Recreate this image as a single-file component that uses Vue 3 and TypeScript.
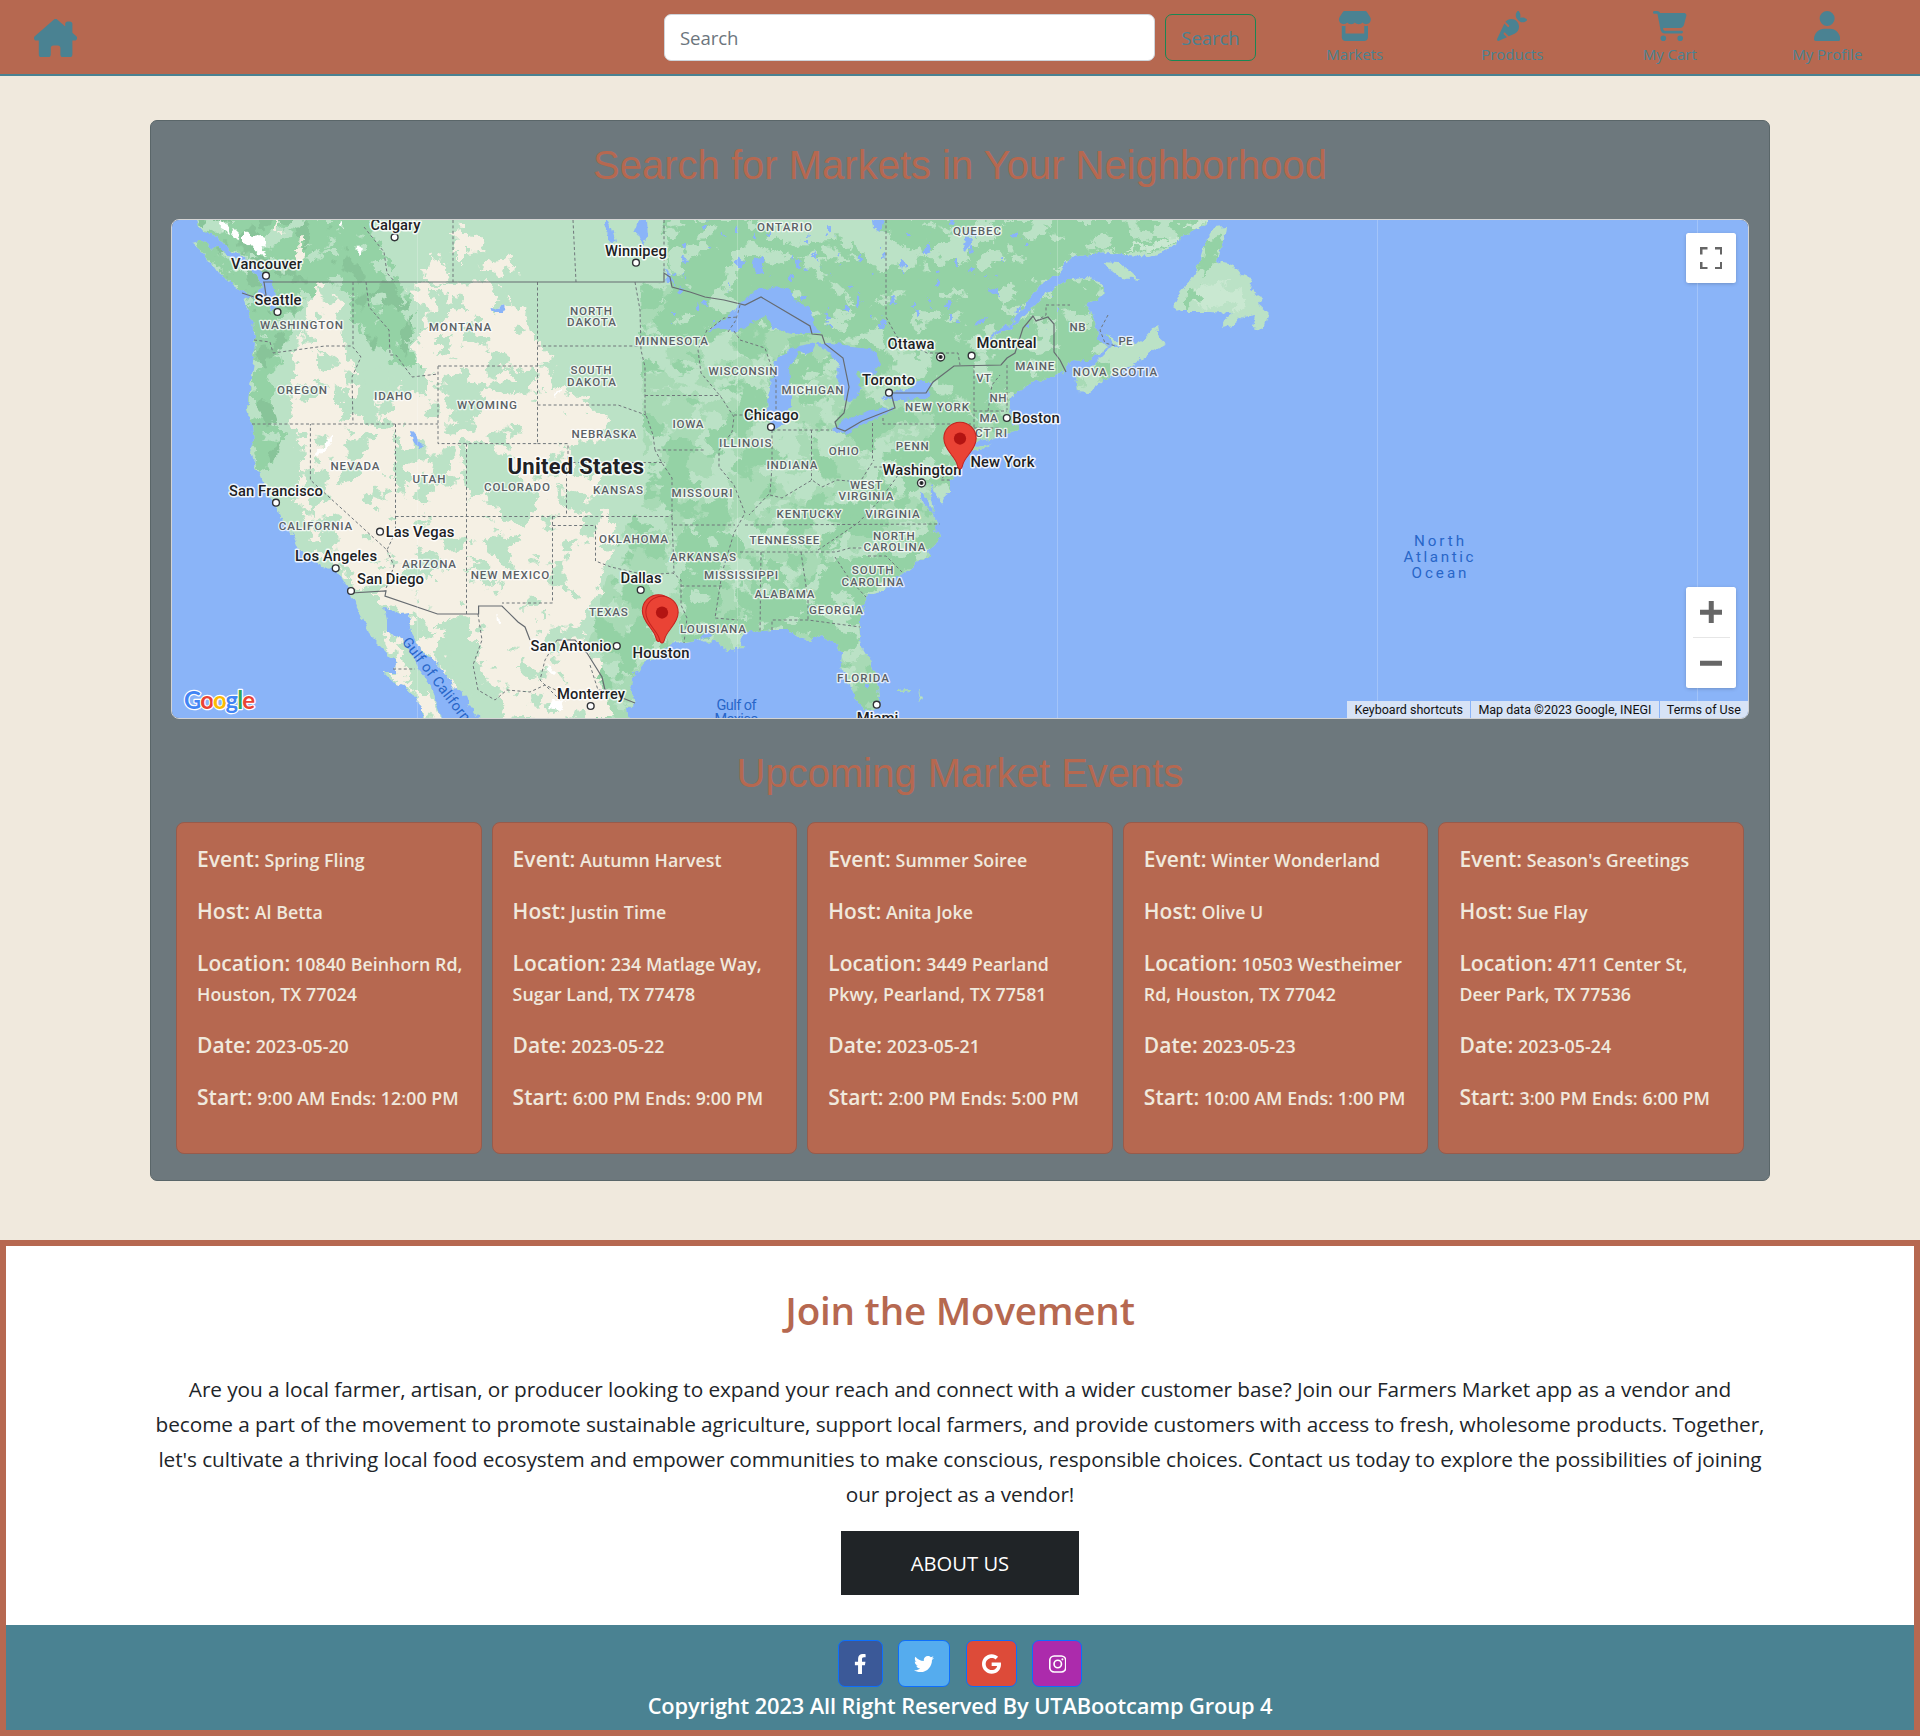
<script setup lang="ts">
interface MapLabel { t: string; x: number; y: number; w: number }
interface Dot { x: number; y: number }
interface MarketEvent { name: string; host: string; address: string[]; date: string; start: string; end: string }

const label = (t: string, x: number, y: number, w: number): MapLabel => ({ t, x, y, w })

const cities: MapLabel[] = [
  label('Calgary', 395.5, 230, 50), label('Winnipeg', 636, 256, 62), label('Vancouver', 266.6, 269, 71),
  label('Seattle', 278, 305, 47), label('San Francisco', 276, 495.7, 94), label('Las Vegas', 420, 536.7, 68.5),
  label('Los Angeles', 336, 561, 82), label('San Diego', 390.5, 584, 67), label('Dallas', 641, 582.7, 41),
  label('San Antonio', 571, 651, 81), label('Houston', 661, 658, 57), label('Monterrey', 591, 699, 68),
  label('Ottawa', 911, 349, 47), label('Montreal', 1006.6, 348, 60), label('Toronto', 888.6, 385.3, 53),
  label('Boston', 1036, 423.3, 47.5), label('Chicago', 771.3, 420.2, 54.7), label('New York', 1002.4, 467, 64),
  label('Washington', 922, 475, 79), label('Miami', 877.5, 722.5, 41.5),
]

const states: MapLabel[] = [
  label('WASHINGTON', 301.6, 328.7, 83), label('MONTANA', 460, 331, 62.5), label('NORTH', 591, 315, 42),
  label('DAKOTA', 591.5, 326.3, 49), label('SOUTH', 591, 374.3, 41), label('DAKOTA', 591.5, 385.7, 49),
  label('MINNESOTA', 671.5, 345.3, 73), label('OREGON', 302, 393.7, 50), label('IDAHO', 393, 400, 38),
  label('WYOMING', 487, 409.3, 60), label('IOWA', 688, 428.3, 31), label('NEBRASKA', 604, 437.7, 65),
  label('NEVADA', 355, 470, 49), label('UTAH', 429, 483.3, 33), label('COLORADO', 517, 490.7, 66),
  label('KANSAS', 618, 493.7, 50), label('CALIFORNIA', 315.5, 530, 73.5), label('ARIZONA', 429, 568.3, 54),
  label('NEW MEXICO', 510, 578.7, 78.5), label('OKLAHOMA', 633.5, 543.3, 69), label('TEXAS', 608.4, 615.7, 39),
  label('ONTARIO', 784.5, 230.7, 55), label('QUEBEC', 977, 235, 48), label('NB', 1077.5, 331, 16),
  label('PE', 1125.6, 344.7, 14), label('WISCONSIN', 743, 375, 69), label('MICHIGAN', 812.5, 393.7, 62),
  label('VT', 983.7, 381.7, 15), label('MAINE', 1034.8, 369.7, 39), label('NOVA SCOTIA', 1115, 375.7, 84.5),
  label('NH', 998, 401.7, 17), label('NEW YORK', 937, 411, 64), label('MA', 988.6, 421.7, 18),
  label('CT RI', 991, 436.7, 32), label('ILLINOIS', 745.3, 447.3, 52.4), label('OHIO', 843.8, 455, 30),
  label('PENN', 912.3, 450.3, 33), label('INDIANA', 792, 469, 51), label('WEST', 866, 489, 32),
  label('VIRGINIA', 866, 500.3, 55), label('MISSOURI', 702, 497, 61), label('KENTUCKY', 809, 518, 65),
  label('VIRGINIA', 892.5, 518, 54.5), label('TENNESSEE', 784.4, 543.7, 70), label('NORTH', 893.8, 539.7, 41.7),
  label('CAROLINA', 894.4, 551, 62), label('ARKANSAS', 703, 561, 66), label('MISSISSIPPI', 741, 579.3, 74),
  label('SOUTH', 872.7, 574.3, 41.7), label('CAROLINA', 872.5, 585.7, 62), label('ALABAMA', 784.5, 598.3, 60),
  label('GEORGIA', 836, 613.7, 54), label('LOUISIANA', 713, 633.3, 66), label('FLORIDA', 863, 682.3, 52),
]

const dot = (x: number, y: number): Dot => ({ x, y })
const dots: Dot[] = [
  dot(394.6, 237.3), dot(636, 262.7), dot(266, 275.7), dot(277.5, 312), dot(276, 502.7), dot(380, 531.7),
  dot(335.7, 568.3), dot(351, 591), dot(640.7, 590), dot(616.8, 646), dot(590.7, 706), dot(971.6, 355.7),
  dot(889, 392.7), dot(1006.8, 418), dot(771, 427), dot(876.7, 704.7),
]
const capitals: Dot[] = [dot(940.6, 357), dot(921.5, 483)]
const pins: Dot[] = [dot(960, 469), dot(658.5, 641.5), dot(662, 643)]
const seams: number[] = [417.5, 737.5, 1057.5, 1377.5, 1697.5]

const landPath =
  'M196 218L199 226L204 232L212 234L221 240L226 247L232 252L245 257L254 266L266 276L270 284L275 292L277 303L272 312L268 302L252 297L244 298L248 310L252 322L255 337L254 363L250 387L247 410L252 425L254 440L250 452L257 470L264 487L271 498L277 508L282 520L293 535L300 552L318 560L321 567L334 568L343 580L351 593L357 607L364 620L371 637L384 650L396 662L395 672L382 672L393 683L407 687L414 697L422 707L422 722L443 722L436 703L432 687L421 673L412 653L400 637L387 633L387 620L384 607L393 610L400 614L409 613L412 633L421 650L436 663L445 672L454 687L466 697L470 705L482 722 ' +
  'L629 722L627 710L635 703L630 687L634 672L640 669L646 662L664 650L675 642L686 643L700 640L709 643L713 638L720 647L728 650L744 648L738 641L745 634L751 632L772 630L789 630L799 638L809 640L822 635L835 643L842 653L841 667L849 683L856 700L864 710L874 711L879 703L878 687L870 660L862 647L859 627L862 610L868 595L881 592L893 580L908 570L920 560L931 557L926 551L936 545L941 537L934 531L937 521L931 511L922 503L920 491L928 500L935 514L931 494L929 481L936 494L941 505L944 498L950 493L950 480L960 468L966 453L977 450L992 443L978 447L966 445L984 440L996 438L1006 433L1019 430L1018 424L1013 425L1010 413L1011 400L1019 390L1034 382L1050 377L1063 372L1073 360L1085 361L1096 355L1107 347L1098 340L1096 323L1090 310L1085 305L1103 297L1104 285L1097 279L1084 278L1065 280L1042 297L1027 313L1011 328L997 334L980 344L990 335L1011 324L1027 303L1042 282L1059 275L1063 264L1073 257L1090 254L1111 253L1149 257L1168 250L1187 233L1205 225L1214 218Z ' +
  'M192 243L200 241L207 242L212 249L218 247L228 256L239 259L257 275L262 288L254 297L244 291L236 287L230 282L218 273L214 267L209 262L200 250Z ' +
  'M1214 228L1226 227L1224 240L1216 260L1220 262L1233 265L1241 275L1252 277L1250 290L1262 297L1258 304L1268 313L1262 330L1252 328L1255 315L1243 317L1233 325L1222 327L1226 318L1233 313L1210 312L1180 312L1173 307L1180 293L1191 280L1199 263L1205 243Z ' +
  'M1101 262L1119 263L1140 280L1122 278Z ' +
  'M1076 373L1090 368L1111 347L1130 347L1143 340L1157 325L1159 337L1166 343L1149 353L1130 367L1103 380L1088 393L1078 392Z ' +
  'M1105 333L1115 341L1134 343L1128 348L1112 344Z ' +
  'M898 690L911 689L910 691L898 692ZM918 690L922 697L919 702L920 696Z'

const forestPath =
  'M196 218L365 218L384 252L395 282L410 284L408 310L420 330L408 345L420 365L412 377L396 355L372 350L356 318L352 290L330 282L300 300L286 340L278 360L270 400L282 440L276 458L262 470L250 452L247 410L255 363L252 320L244 298L236 287L192 243Z ' +
  'M664 218L1214 218L1168 250L1073 257L1059 275L1011 324L1042 297L1065 280L1103 285L1107 347L1063 372L1010 400L985 405L974 440L955 455L934 490L926 482L905 470L880 510L850 530L820 560L870 560L900 540L937 525L941 540L908 570L866 595L861 640L835 643L800 630L730 630L680 636L681 580L674 540L690 530L735 535L722 575L717 620L745 618L765 560L780 560L790 600L815 580L820 540L860 510L890 465L930 440L940 412L900 400L930 366L896 340L880 350L820 335L772 328L735 332L705 330L670 345L655 330L660 300L672 287Z ' +
  'M775 370L805 352L830 360L815 378L796 382L788 376Z M430 360L446 372L440 415L448 440L432 430L418 470L424 400Z M500 460L520 470L535 510L508 508L488 480Z'

const plainsPath =
  'M405 288L430 284L500 283L510 300L525 310L537 343L560 357L546 393L575 392L610 420L600 440L568 446L572 476L600 480L580 510L614 520L618 547L603 567L600 590L593 607L578 627L586 640L604 673L602 690L614 717L507 722L500 690L482 680L474 640L462 618L443 620L437 680L470 705L412 633L407 612L384 606L384 593L357 593L345 570L321 560L307 520L296 495L298 470L307 453L296 440L293 420L290 390L293 357L303 330L307 303L318 287L326 292L339 300L337 320L343 337L357 377L352 417L375 424L385 395L400 385L418 398L421 370L415 340L430 325L420 305Z ' +
  'M453 225L462 236L475 232L482 246L470 256L454 256ZM421 270L432 262L437 252L448 270L450 281L425 280ZM478 265L495 262L510 260L515 270L495 274L485 272ZM291 243L305 242L308 255L300 270L296 255ZM275 218L284 240L280 218Z ' +
  'M384 650L396 662L395 672L382 672L393 683L412 690L408 670L400 640L387 633Z M414 690L430 690L440 722L422 722Z'

const greenOnPlains =
  'M460 440L488 444L520 476L540 500L524 530L500 512L486 490L466 500ZM420 548L435 554L444 570L430 574L412 566ZM466 550L490 570L500 588L484 586ZM430 290L460 300L470 315L440 305ZM440 380L460 372L490 395L470 425L450 412ZM452 405L470 412L450 430ZM340 390L358 400L350 420L338 410ZM398 360L420 372L430 400L410 390ZM310 460L330 500L316 520L304 495ZM396 430L410 455L405 500L392 480ZM440 625L462 622L480 650L478 680L500 700L490 720L465 690L448 660ZM556 480L566 492L590 502L578 512L560 502ZM380 360L395 380L372 400L362 378ZM320 350L340 358L335 372L318 362ZM440 330L455 342L436 356ZM520 360L534 380L525 395L510 378ZM545 610L550 616L540 618ZM425 470L432 490L420 512L414 494Z'

const waterPath =
  'M709 330L722 320L740 305L750 295L759 288L789 287L795 302L809 307L814 323L820 333L793 333L772 328L767 317L752 322L736 332L724 329Z ' +
  'M768 413L767 397L771 380L776 360L793 347L816 343L812 352L805 354L798 350L796 358L789 367L791 390L791 407L786 423L772 431Z ' +
  'M816 343L830 343L850 346L870 348L877 355L881 367L870 377L858 370L860 390L853 400L849 403L843 395L837 380L838 362L833 357L825 350Z ' +
  'M832 430L841 421L851 418L870 411L895 407L881 418L862 424L847 435Z ' +
  'M883 400L893 392L905 389L920 382L933 382L927 398L904 400Z ' +
  'M639 218L646 220L647 240L643 246L639 236L634 232ZM607 218L612 228L616 243L610 240L603 225ZM411 432L416 433L418 440L422 445L419 449L413 441ZM665 268L671 277L676 286L672 283L667 283ZM752 260L763 255L763 273L756 274ZM872 218L884 220L881 232L873 228ZM967 234L972 240L966 252L962 248ZM987 288L998 290L998 296L990 293ZM491 310L505 306L503 312L494 312ZM700 640L706 630L712 636ZM866 684L870 683L870 688L866 689ZM264 274L273 282L276 296L270 298L264 286Z'

const saltPath =
  'M220 220L228 224L231 234L221 229ZM233 228L240 235L237 241L232 236ZM243 231L253 236L259 235L266 240L267 248L261 245L266 256L260 255L251 245L243 242ZM357 244L361 250L360 257L356 254ZM340 220L344 228L339 226ZM323 446L332 434L332 442L318 457L314 456ZM548 665L554 672L553 675L546 669ZM552 700L566 702L560 710L548 708ZM496 614L502 625L498 625ZM562 388L555 397L554 393Z'

const stateLines =
  'M364 227L384 252L387 273L395 282M453 220V282M573 220L576 282M664 220V273M353 282V346M254 340L270 342L273 353L325 346H352L361 357L352 377L353 424M252 424H438M366 282L369 307L389 330L390 355H396L412 377L438 374M438 366H537.5V443.6H438ZM537.5 282V366M537.5 346H641M537.5 405H618L646 415M635 282L640 310L641 350L645 367V412L653 435L655 450H705M645 395.5H721M537.5 443.6H568V462.5H665M466.5 443.6V614M566.5 462V516.5M395.5 516.5H672V478L662 463L655 450M395.5 424V532L387 550L310.4 480V424M387 550L394 566L385 591M552.5 516.5V603H502M552.5 525.5H595.5V561L611 567L646 575L673 573L681 580V605L687 618L684 643M672 517L674 573M681 586H722M674 525H735 ' +
  'M707 330L698 350L701 373L721 397L734 417L732 432L719 450V467L734 485L745 513L734 533L722 573L715 618L738 620M734 415H766M734 331L740 340L765 348L776 380V420M772 430V467L770 493L749 515M811.5 430V480M772 430H832M770 495L782 498L812 480L822 487L837 480L860 482L874 460M872.5 423V460M883 418V424H971M874 467H950M745 525L940 524M740 552H836L850 548H866M761 552L760 631M801 552L808 600V620M772 630V620H808L860 627M835 557L850 580L866 597M868 556H886L902 572M818 550L858 523M858 523L880 500L904 467M974 365V442M1007 365V410M974 411H1007M988 411L992 385L1000 375M974 428H1000M886 220V317L897 337L927 353H958L960 365M740 305L736 320L728 332M1036 321L1046 315V305H1070M950 467L941 480H950M393 669H415M478 614L482 640L473 665L478 690L495 700L507 690L530 692L545 685L560 692M557 640L545 660L540 680L560 700M590 665L598 690L610 690M710 329L724 318L738 317M1108 315L1100 330L1105 343L1116 346'

const countryLines =
  'M263 282H664V273L670 277L672 287L690 292L705 297L724 300L745 305L761 297L810 326L812 334L822 335L825 344L843 358L849 387L844 413L835 422L837 428L845 431L862 421L895 408L891 393H926L933 382L954 366L1001 365L1007 358L1015 353L1023 328L1033 316L1036 321L1048 317L1054 324V352L1060 360L1066 372M242 293L254 297L266 295L264 282M351 593L386 591L385 596L437.5 614H478.6V606H502L518 622L525 627L530 640M557 640H575L587 653L602 677L605 690L620 697L635 703'

const events: MarketEvent[] = [
  { name: 'Spring Fling', host: 'Al Betta', address: ['10840 Beinhorn Rd,', 'Houston, TX 77024'], date: '2023-05-20', start: '9:00 AM', end: '12:00 PM' },
  { name: 'Autumn Harvest', host: 'Justin Time', address: ['234 Matlage Way,', 'Sugar Land, TX 77478'], date: '2023-05-22', start: '6:00 PM', end: '9:00 PM' },
  { name: 'Summer Soiree', host: 'Anita Joke', address: ['3449 Pearland', 'Pkwy, Pearland, TX 77581'], date: '2023-05-21', start: '2:00 PM', end: '5:00 PM' },
  { name: 'Winter Wonderland', host: 'Olive U', address: ['10503 Westheimer', 'Rd, Houston, TX 77042'], date: '2023-05-23', start: '10:00 AM', end: '1:00 PM' },
  { name: "Season's Greetings", host: 'Sue Flay', address: ['4711 Center St,', 'Deer Park, TX 77536'], date: '2023-05-24', start: '3:00 PM', end: '6:00 PM' },
]

const navLinks = [
  { text: 'Markets', box: '0 0 576 512', w: 33.75, d: 'M547.6 103.8L490.3 13.1C485.2 5 476.1 0 466.4 0H109.6C99.9 0 90.8 5 85.7 13.1L28.3 103.8c-29.6 46.8-3.4 111.9 51.9 119.4c4 .5 8.1 .8 12.1 .8c26.1 0 49.3-11.4 65.2-29c15.9 17.6 39.1 29 65.2 29c26.1 0 49.3-11.4 65.2-29c15.9 17.6 39.1 29 65.2 29c26.2 0 49.3-11.4 65.2-29c16 17.6 39.1 29 65.2 29c4.1 0 8.1-.3 12.1-.8c55.5-7.4 81.8-72.5 52.1-119.4zM499.7 254.9l-.1 0c-5.3 .7-10.7 1.1-16.2 1.1c-12.4 0-24.3-1.9-35.4-5.3V384H128V250.6c-11.2 3.5-23.2 5.4-35.6 5.4c-5.5 0-11-.4-16.3-1.1l-.1 0c-4.1-.6-8.1-1.3-12-2.3V384v64c0 35.3 28.7 64 64 64H448c35.3 0 64-28.7 64-64V384 252.6c-4 1-8 1.8-12.3 2.3z' },
  { text: 'Products', box: '0 0 512 512', w: 30, d: 'M346.7 6C337.6 17 320 42.3 320 72c0 40 15.3 55.3 40 80s40 40 80 40c29.7 0 55-17.6 66-26.7c4-3.3 6-8.2 6-13.3s-2-10-6-13.2c-11.4-9.1-38.3-26.8-74-26.8c-32 0-40 8-40 8s8-8 8-40c0-35.7-17.7-62.6-26.8-74C370 2 365.1 0 360 0s-10 2-13.3 6zM244.6 136c-40 0-77.1 18.1-101.7 48.2l60.5 60.5c6.2 6.2 6.2 16.4 0 22.6s-16.4 6.2-22.6 0l-55.3-55.3 0 .1L2.2 477.9C-2 487-.1 497.8 7 505s17.9 9 27.1 4.8l134.7-62.4-52.1-52.1c-6.2-6.2-6.2-16.4 0-22.6s16.4-6.2 22.6 0L199.7 433l100.2-46.4c46.4-21.5 76.2-68 76.2-119.2C376 194.8 317.2 136 244.6 136z' },
  { text: 'My Cart', box: '0 0 576 512', w: 33.75, d: 'M0 24C0 10.7 10.7 0 24 0H69.5c22 0 41.5 12.8 50.6 32h411c26.3 0 45.5 25 38.6 50.4l-41 152.3c-8.5 31.4-37 53.3-69.5 53.3H170.7l5.4 28.5c2.2 11.3 12.1 19.5 23.6 19.5H488c13.3 0 24 10.7 24 24s-10.7 24-24 24H199.7c-34.6 0-64.3-24.6-70.7-58.5L77.4 54.5c-.7-3.8-4-6.5-7.9-6.5H24C10.7 48 0 37.3 0 24zM128 464a48 48 0 1 1 96 0 48 48 0 1 1 -96 0zm336-48a48 48 0 1 1 0 96 48 48 0 1 1 0-96z' },
  { text: 'My Profile', box: '0 0 448 512', w: 26.25, d: 'M224 256A128 128 0 1 0 224 0a128 128 0 1 0 0 256zm-45.7 48C79.8 304 0 383.8 0 482.3C0 498.7 13.3 512 29.7 512H418.3c16.4 0 29.7-13.3 29.7-29.7C448 383.8 368.2 304 269.7 304H178.3z' },
]

const pitch: string[] = [
  'Are you a local farmer, artisan, or producer looking to expand your reach and connect with a wider customer base? Join our Farmers Market app as a vendor and',
  'become a part of the movement to promote sustainable agriculture, support local farmers, and provide customers with access to fresh, wholesome products. Together,',
  "let's cultivate a thriving local food ecosystem and empower communities to make conscious, responsible choices. Contact us today to explore the possibilities of joining",
  'our project as a vendor!',
]
</script>

<template>
  <div class="page">
    <header class="navbar">
      <a class="home" aria-label="Home">
        <svg viewBox="0 0 576 512" width="43.2" height="38.4"><path d="M543.8 287.6c17 0 32-14 32-32.1c1-9-3-17-11-24L512 185V64c0-17.7-14.3-32-32-32H448c-17.7 0-32 14.3-32 32v36.7L309.5 7c-6-5-14-7-21-7s-15 1-22 8L10 231.5c-7 7-10 15-10 24c0 18 14 32.1 32 32.1h32v69.7c-.1 .9-.1 1.8-.1 2.8V472c0 22.1 17.9 40 40 40h16c1.2 0 2.4-.1 3.6-.2c1.5 .1 3 .2 4.5 .2H160h24c22.1 0 40-17.9 40-40V448 384c0-17.7 14.3-32 32-32h64c17.7 0 32 14.3 32 32v64 24c0 22.1 17.9 40 40 40h24 32.5c1.4 0 2.8 0 4.2-.1c1.1 .1 2.2 .1 3.3 .1h16c22.1 0 40-17.9 40-40V455.8c.3-2.6 .5-5.3 .5-8.1l-.7-160.2h32z" /></svg>
      </a>
      <form class="search">
        <input type="text" placeholder="Search" />
        <button type="button">Search</button>
      </form>
      <nav class="links">
        <a v-for="l in navLinks" :key="l.text">
          <svg :viewBox="l.box" :width="l.w" height="30"><path :d="l.d" /></svg>
          <span>{{ l.text }}</span>
        </a>
      </nav>
    </header>

    <main class="panel">
      <h1>Search for Markets in Your Neighborhood</h1>
      <div class="map">
        <svg class="canvas" viewBox="172 220 1576 498" width="1576" height="498">
          <defs>
            <clipPath id="land"><path :d="landPath" /></clipPath>
            <clipPath id="forest"><path :d="forestPath" /></clipPath>
            <clipPath id="plains"><path :d="plainsPath" /></clipPath>
            <clipPath id="eastern"><path d="M640 284H672L705 330L1110 330V722H590L590 640L615 545L645 500Z" /></clipPath>
            <filter id="rough" x="-5%" y="-5%" width="110%" height="110%">
              <feTurbulence type="fractalNoise" baseFrequency="0.07" numOctaves="3" seed="4" />
              <feDisplacementMap in="SourceGraphic" scale="26" xChannelSelector="R" yChannelSelector="G" />
            </filter>
            <filter id="coast" x="-5%" y="-5%" width="110%" height="110%">
              <feTurbulence type="fractalNoise" baseFrequency="0.14" numOctaves="3" seed="9" />
              <feDisplacementMap in="SourceGraphic" scale="7" xChannelSelector="R" yChannelSelector="G" />
            </filter>
            <filter id="n-dark" x="0" y="0" width="100%" height="100%" color-interpolation-filters="sRGB">
              <feTurbulence type="fractalNoise" baseFrequency="0.045 0.035" numOctaves="3" seed="12" />
              <feColorMatrix values="0 0 0 0 0.535  0 0 0 0 0.77  0 0 0 0 0.6  30 0 0 0 -17.2" />
            </filter>
            <filter id="n-green" x="0" y="0" width="100%" height="100%" color-interpolation-filters="sRGB">
              <feTurbulence type="fractalNoise" baseFrequency="0.026 0.032" numOctaves="4" seed="21" />
              <feColorMatrix values="0 0 0 0 0.58  0 0 0 0 0.824  0 0 0 0 0.647  40 0 0 0 -21.5" />
            </filter>
            <filter id="n-mid" x="0" y="0" width="100%" height="100%" color-interpolation-filters="sRGB">
              <feTurbulence type="fractalNoise" baseFrequency="0.03 0.04" numOctaves="4" seed="33" />
              <feColorMatrix values="0 0 0 0 0.66  0 0 0 0 0.855  0 0 0 0 0.71  40 0 0 0 -19.6" />
            </filter>
            <filter id="n-light" x="0" y="0" width="100%" height="100%" color-interpolation-filters="sRGB">
              <feTurbulence type="fractalNoise" baseFrequency="0.035 0.045" numOctaves="4" seed="7" />
              <feColorMatrix values="0 0 0 0 0.733  0 0 0 0 0.886  0 0 0 0 0.776  40 0 0 0 -24.2" />
            </filter>
            <filter id="n-lake" x="0" y="0" width="100%" height="100%" color-interpolation-filters="sRGB">
              <feTurbulence type="fractalNoise" baseFrequency="0.09 0.07" numOctaves="3" seed="17" />
              <feColorMatrix values="0 0 0 0 0.541  0 0 0 0 0.706  0 0 0 0 0.973  40 0 0 0 -28.4" />
            </filter>
          </defs>
          <rect x="172" y="220" width="1576" height="498" fill="#8ab4f8" />
          <g filter="url(#coast)">
            <path :d="landPath" fill="#bbe2c6" />
            <g clip-path="url(#land)">
              <g clip-path="url(#eastern)">
                <rect x="560" y="280" width="580" height="440" filter="url(#n-mid)" />
                <rect x="560" y="280" width="580" height="440" filter="url(#n-green)" />
              </g>
              <path :d="forestPath" fill="#94d2a5" filter="url(#rough)" />
              <g clip-path="url(#forest)">
                <rect x="172" y="218" width="240" height="260" filter="url(#n-dark)" />
                <rect x="172" y="218" width="1050" height="430" filter="url(#n-light)" />
              </g>
              <path d="M745 218L870 218L905 250L960 240L1010 218L960 262L930 258L880 272L850 240L780 244Z" fill="#bbe2c6" filter="url(#rough)" />
              <path d="M1110 250L1168 248L1214 218L1206 218L1165 240ZM1216 285L1240 288L1246 308L1225 305L1195 308L1200 288Z" fill="#c9e8d1" filter="url(#rough)" />
              <path d="M1206 240L1222 232L1214 262L1200 275ZM1186 296L1200 286L1204 300L1186 308Z" fill="#94d2a5" filter="url(#rough)" />
              <path :d="plainsPath" fill="#f5f0e4" filter="url(#rough)" />
              <path :d="greenOnPlains" fill="#bbe2c6" filter="url(#rough)" />
              <g clip-path="url(#plains)">
                <rect x="280" y="280" width="350" height="440" filter="url(#n-light)" />
              </g>
              <rect x="670" y="218" width="390" height="110" filter="url(#n-lake)" />
            </g>
            <path :d="waterPath" fill="#8ab4f8" />
            <path :d="saltPath" fill="#fff" />
          </g>
          <path :d="stateLines" fill="none" stroke="#70777b" stroke-width="1" stroke-dasharray="3 2.4" />
          <path :d="countryLines" fill="none" stroke="#666b70" stroke-width="1.2" />
          <path v-for="s in seams" :key="s" :d="`M${s} 220V718`" stroke="#fff" stroke-opacity=".22" />

          <g class="state">
            <text v-for="(s, i) in states" :key="i" :x="s.x - s.w / 2" :y="s.y" :textLength="s.w">{{ s.t }}</text>
          </g>
          <g class="spot">
            <circle v-for="(d, i) in dots" :key="i" :cx="d.x" :cy="d.y" r="3.4" />
            <g v-for="(d, i) in capitals" :key="'c' + i">
              <circle :cx="d.x" :cy="d.y" r="4" />
              <circle class="core" :cx="d.x" :cy="d.y" r="1.4" />
            </g>
          </g>
          <g class="city">
            <text v-for="c in cities" :key="c.t" :x="c.x - c.w / 2" :y="c.y" :textLength="c.w">{{ c.t }}</text>
          </g>
          <text class="country" x="507.500" y="474" textLength="136.500">United States</text>
          <g class="sea">
            <text x="716.500" y="709.8" textLength="40">Gulf of</text>
            <text x="714.500" y="724.3" textLength="44">Mexico</text>
            <text class="wide" x="1414" y="545.8" textLength="50">North</text>
            <text class="wide" x="1403.500" y="562" textLength="70">Atlantic</text>
            <text class="wide" x="1411.500" y="578" textLength="55">Ocean</text>
            <text transform="translate(401.5 642) rotate(52.5)" textLength="114">Gulf of California</text>
          </g>
          <g v-for="(p, i) in pins" :key="'p' + i" :transform="`translate(${p.x} ${p.y}) scale(1.05)`">
            <path d="M0 0C-1.6 0-2-1.6-2.6-4C-4.6-12.5-15.4-18-15.4-29.2A15.4 15.4 0 0 1 15.4-29.2C15.4-18 4.6-12.5 2.6-4C2-1.6 1.6 0 0 0Z" fill="#ea4335" stroke="#c5221f" stroke-width="1" />
            <circle cy="-29" r="5.8" fill="#b31412" />
          </g>
          <text class="google" x="184" y="709" textLength="71"><tspan fill="#4285f4">G</tspan><tspan fill="#ea4335">o</tspan><tspan fill="#fbbc04">o</tspan><tspan fill="#4285f4">g</tspan><tspan fill="#34a853">l</tspan><tspan fill="#ea4335">e</tspan></text>
        </svg>
        <button class="ctl full" aria-label="Toggle fullscreen">
          <svg viewBox="0 0 18 18" width="22.5" height="22.5"><path d="M0 0v6h2V2h4V0zM16 0h-4v2h4v4h2V0zM16 16h-4v2h6v-6h-2zM2 12H0v6h6v-2H2z" /></svg>
        </button>
        <div class="ctl zoom">
          <svg viewBox="0 0 18 18" width="22.5" height="22.5"><path d="M18 7h-7V0H7v7H0v4h7v7h4v-7h7z" /></svg>
          <i></i>
          <svg viewBox="0 0 18 18" width="22.5" height="22.5"><path d="M0 7h18v4H0z" /></svg>
        </div>
        <div class="legal"><span>Keyboard shortcuts</span><span>Map data ©2023 Google, INEGI</span><span>Terms of Use</span></div>
      </div>

      <h1 class="upcoming">Upcoming Market Events</h1>
      <div class="cards">
        <article v-for="e in events" :key="e.name">
          <p><b>Event:</b> {{ e.name }}</p>
          <p><b>Host:</b> {{ e.host }}</p>
          <p><b>Location:</b> {{ e.address[0] }}<br />{{ e.address[1] }}</p>
          <p><b>Date:</b> {{ e.date }}</p>
          <p><b>Start:</b> {{ e.start }} Ends: {{ e.end }}</p>
        </article>
      </div>
    </main>

    <footer class="bottom">
      <section class="join">
        <h2>Join the Movement</h2>
        <p><span v-for="(line, i) in pitch" :key="i">{{ line }}</span></p>
        <button>ABOUT US</button>
      </section>
      <section class="social">
        <div class="icons">
          <a class="fb"><svg viewBox="0 0 320 512" width="12.5" height="20"><path d="M279.14 288l14.22-92.66h-88.91v-60.13c0-25.35 12.42-50.06 52.24-50.06h40.42V6.26S260.43 0 225.36 0c-73.22 0-121.08 44.38-121.08 124.72v70.62H22.89V288h81.39v224h100.17V288z" /></svg></a>
          <a class="tw"><svg viewBox="0 0 512 512" width="20" height="20"><path d="M459.37 151.716c.325 4.548.325 9.097.325 13.645 0 138.72-105.583 298.558-298.558 298.558-59.452 0-114.68-17.219-161.137-47.106 8.447.974 16.568 1.299 25.34 1.299 49.055 0 94.213-16.568 130.274-44.832-46.132-.975-84.792-31.188-98.112-72.772 6.498.974 12.995 1.624 19.818 1.624 9.421 0 18.843-1.3 27.614-3.573-48.081-9.747-84.143-51.98-84.143-102.985v-1.299c13.969 7.797 30.214 12.67 47.431 13.319-28.264-18.843-46.781-51.005-46.781-87.391 0-19.492 5.197-37.36 14.294-52.954 51.655 63.675 129.3 105.258 216.365 109.807-1.624-7.797-2.599-15.918-2.599-24.04 0-57.828 46.782-104.934 104.934-104.934 30.213 0 57.502 12.67 76.67 33.137 23.715-4.548 46.456-13.32 66.599-25.34-7.798 24.366-24.366 44.833-46.132 57.827 21.117-2.273 41.584-8.122 60.426-16.243-14.292 20.791-32.161 39.308-52.628 54.253z" /></svg></a>
          <a class="gg"><svg viewBox="0 0 488 512" width="19" height="20"><path d="M488 261.8C488 403.3 391.1 504 248 504 110.8 504 0 393.2 0 256S110.8 8 248 8c66.8 0 123 24.5 166.3 64.9l-67.5 64.9C258.5 52.6 94.3 116.6 94.3 256c0 86.5 69.1 156.6 153.7 156.6 98.2 0 135-70.4 140.8-106.9H248v-85.3h236.1c2.3 12.7 3.9 24.9 3.9 41.4z" /></svg></a>
          <a class="ig"><svg viewBox="0 0 448 512" width="17.5" height="20"><rect x="20" y="52" width="408" height="408" rx="112" fill="none" stroke="#fff" stroke-width="42" /><circle cx="224" cy="256" r="95" fill="none" stroke="#fff" stroke-width="42" /><circle cx="343.6" cy="136.4" r="26.8" /></svg></a>
        </div>
        <p>Copyright 2023 All Right Reserved By UTABootcamp Group 4</p>
      </section>
    </footer>
  </div>
</template>

<style>
body { margin: 0; background: #f0e9dd; }
</style>

<style scoped>
* { box-sizing: border-box; }
.page { width: 1920px; height: 1736px; background: #f0e9dd; font-family: "Open Sans", "Noto Sans", sans-serif; color: #212529; display: flex; flex-direction: column; }
h1, h2, p { margin: 0; }
svg { display: block; }

.navbar { height: 76px; flex: none; background: #b66850; border-bottom: 2px solid #4a8292; display: flex; align-items: center; justify-content: space-between; padding-left: 34px; padding-right: 14px; }
.navbar svg { fill: #4a8292; }
.home { width: 610px; padding-top: 2px; }
.search { display: flex; gap: 10px; width: 592px; margin-top: 1px; }
.search input { width: 491px; height: 47px; border: 1px solid #ced4da; border-radius: 7px; padding: 0 15px 1px; background: #fff; font: 400 18.6px "Open Sans", sans-serif; letter-spacing: -.1px; }
.search input::placeholder { color: #6c757d; opacity: 1; }
.search button { width: 91px; height: 47px; border: 1px solid #198754; border-radius: 7px; padding: 0 0 1px; background: none; color: #4a8292; font: 400 18.6px "Open Sans", sans-serif; letter-spacing: -.1px; }
.links { display: flex; width: 630px; height: 74px; }
.links a { width: 157.5px; display: flex; flex-direction: column; align-items: center; padding-top: 11px; color: #4a8292; }
.links span { font-size: 15px; line-height: 20px; margin-top: 3px; font-weight: 400; }

.panel { margin: 44px 150px 0; height: 1061px; flex: none; border: 1px solid #5a6669; border-radius: 7px; background: #6d787d; padding: 0 20px; }
h1 { font: 400 40px/48px "Liberation Sans", Arial, sans-serif; color: #b66850; text-align: center; padding-top: 20px; height: 98px; }
.map { position: relative; width: 1578px; height: 500px; border: 1px solid #d3d3d3; border-radius: 8px; overflow: hidden; }
.upcoming { padding-top: 30px; height: 103px; }

.state text { font: 500 11.6px Roboto, sans-serif; fill: #5b6166; stroke: #fff; stroke-opacity: .75; stroke-width: 2.6px; stroke-linejoin: round; paint-order: stroke; }
.city text { font: 500 14.8px Roboto, sans-serif; fill: #202124; stroke: #fff; stroke-opacity: .85; stroke-width: 3px; stroke-linejoin: round; paint-order: stroke; }
.country { font: 700 22px Roboto, sans-serif; fill: #202124; stroke: #fff; stroke-opacity: .85; stroke-width: 3px; stroke-linejoin: round; paint-order: stroke; }
.sea text { font: 400 14.5px Roboto, sans-serif; fill: #2866c8; }
.sea .wide { font-size: 15.2px; }
.google { font: 700 24px Lato, sans-serif; stroke: #fff; stroke-width: 2.4px; stroke-linejoin: round; paint-order: stroke; }
.spot circle { fill: #fff; stroke: #303236; stroke-width: 1.4px; }
.spot .core { fill: #111; }

.ctl { position: absolute; right: 12px; width: 50px; border: 0; padding: 0; background: #fff; border-radius: 2.5px; box-shadow: 0 1px 4px -1px rgba(0, 0, 0, .3); display: flex; flex-direction: column; align-items: center; }
.ctl svg { fill: #666; }
.full { top: 13px; height: 50px; justify-content: center; }
.zoom { bottom: 30px; height: 101px; justify-content: space-between; padding: 13.5px 0 14px; }
.zoom i { width: 37px; height: 1px; background: #e6e6e6; }
.legal { position: absolute; right: 0; bottom: 0; display: flex; gap: 1px; }
.legal span { height: 17px; padding: 0 7.2px; background: rgba(245, 245, 245, .72); color: #111; font: 400 12.5px/17px Roboto, sans-serif; white-space: nowrap; }

.cards { display: flex; gap: 10px; padding: 0 5px; }
article { flex: 1 1 0; min-width: 0; height: 332px; border: 1px solid #985b4b; border-radius: 8px; background: #b66850; color: #f0e9dd; padding: 19px 0 0 20px; }
article p { height: 33px; margin-bottom: 19px; padding-top: 3px; font-size: 17.8px; font-weight: 600; line-height: 30px; letter-spacing: .04px; white-space: nowrap; }
article p:nth-child(3) { height: 63px; }
article b { font-size: 21px; font-weight: 600; line-height: 1; letter-spacing: .05px; }

.bottom { margin-top: 59px; height: 496px; flex: none; border: 6px solid #b66850; background: #fff; display: flex; flex-direction: column; text-align: center; }
.join { height: 379px; display: flex; flex-direction: column; align-items: center; }
h2 { font-size: 38.6px; font-weight: 600; line-height: 48px; color: #b66850; padding-top: 40px; letter-spacing: -.22px; }
.join p { padding-top: 38px; font-size: 20.8px; font-weight: 500; line-height: 35px; color: #212529; }
.join p span { display: block; white-space: nowrap; letter-spacing: -.08px; }
.join button { margin-top: 19px; width: 238px; height: 64px; border: 0; padding: 0; background: #202427; color: #fff; font: 400 20.2px "Open Sans", sans-serif; }
.social { height: 105px; background: #4a8292; padding-top: 15px; }
.icons { display: flex; justify-content: center; gap: 15.4px; }
.icons a { height: 47px; padding: 0 15.2px; border: 1px solid #0d6efd; border-radius: 7px; display: flex; align-items: center; }
.icons svg { fill: #fff; }
.fb { background: #3b5998; }
.tw { background: #55acee; }
.gg { background: #dd4b39; }
.ig { background: #ac2bac; }
.social p { font-size: 21.8px; font-weight: 600; line-height: 38px; color: #fff; letter-spacing: -.1px; }
</style>
